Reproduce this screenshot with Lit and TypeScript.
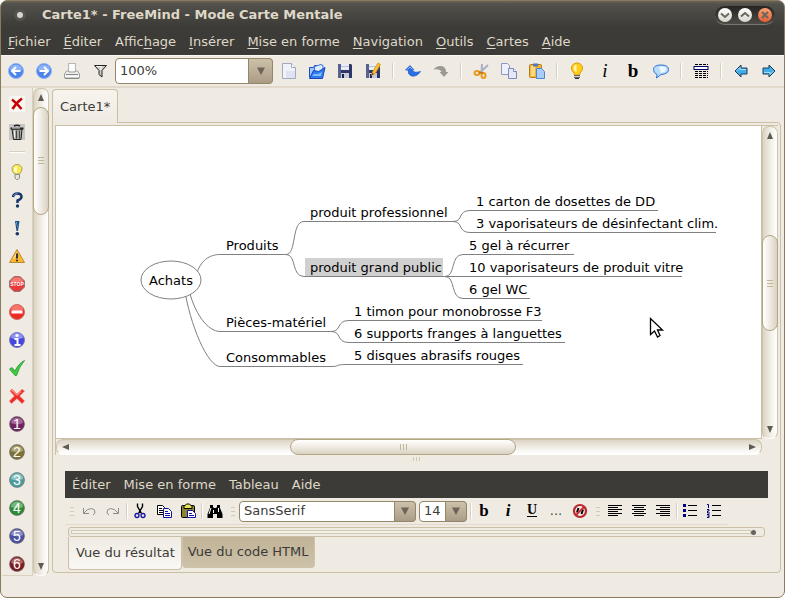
import { LitElement, html, svg, css, nothing, TemplateResult, SVGTemplateResult } from "lit";
import { customElement, property } from "lit/decorators.js";
import { classMap } from "lit/directives/class-map.js";

/* ---------- icons, all on a 16 x 16 grid ---------- */

const roundArrow = (d: string) => svg`
  <circle cx="8" cy="8" r="7.500" fill="#4d84ea" stroke="#8fb2f3"/>
  <path d="M2 7a6 5.500 0 0 1 12 0q-6 3-12 0z" fill="#8db4f7"/>
  <path d=${d} fill="none" stroke="#fff" stroke-width="2"/>`;

const ball = (digit: string, dark: string, light: string) => svg`
  <circle cx="8" cy="8" r="7.500" fill=${dark} stroke="#6d6d6d" stroke-opacity=".6"/>
  <path d="M2 7a6 5.500 0 0 1 12 0q-6 2.500-12 0z" fill=${light}/>
  <text x="8" y="13" text-anchor="middle" class="digit">${digit}</text>`;

const lines = (rows: [number, number][]) =>
  rows.map(([x, w], i) => svg`<rect x=${x} y=${2 + i * 2} width=${w} height="1" fill="#000"/>`);

const floppy = svg`
  <path d="M1 1h13l1 1v13H1z" fill="#2f3768"/>
  <path d="M1 1h3v14H1z" fill="#59628f"/>
  <rect x="4" y="1" width="8" height="6" fill="#e8edf6"/>
  <rect x="4" y="3" width="8" height="1" fill="#b9c4da"/>
  <rect x="4" y="10" width="8" height="5" fill="#c5cbda"/>
  <rect x="5" y="11" width="2" height="4" fill="#1a2046"/>`;

const blueArrow = svg`
  <path d="M2 8 8 2v3h6v6H8v3z" fill="#43ade6" stroke="#1c3a5c"/>
  <path d="M3.500 8 7 4.500V6.500h6" fill="none" stroke="#a5dcf8"/>`;

const ICONS: Record<string, SVGTemplateResult> = {
  prev: roundArrow("M12.500 8H4.500M8 4 4 8l4 4"),
  next: roundArrow("M3.500 8h8M8 4l4 4-4 4"),
  print: svg`
    <path d="M4.500 8V.5h7V8" fill="#fdfdfd" stroke="#b5b5b5"/>
    <path d="M2.500 8h2.500v1h6V8h2.500l2 3v4H.5v-4z" fill="#ececec" stroke="#a0a0a0"/>
    <path d="M2 11.500h12" stroke="#8a8a8a"/><path d="M1 13.500h14" stroke="#fff"/>
    <path d="M1 15.500h14" stroke="#8b8b8b"/>`,
  filter: svg`
    <path d="M2.500 2.500h12L10 7.500V14L7 11.500v-4z" fill="#cfccc4" stroke="#222"/>
    <path d="M4.500 3.500h5L8.500 7" stroke="#fff" fill="none"/>`,
  page: svg`
    <path d="M1.500.5h9l4 4v11h-13z" fill="#f1f3fa" stroke="#a3a9bd"/>
    <path d="M5 8h9v7H5z" fill="#dfe3f1"/>
    <path d="M10.500.5v4h4" fill="#fff" stroke="#a3a9bd"/>`,
  open: svg`
    <path d="M.5 14.500V4.500h4l1-2h3" fill="#9cc8ff" stroke="#1d4fc0"/>
    <path d="M5.500 9V3.500L12 1.500l2 1V9z" fill="#dfeeff" stroke="#3c6fd0"/>
    <path d="M.5 15.500 4.500 7.500l5 1 6.500-4-2.500 11z" fill="#2e7bf0" stroke="#1846b8"/>
    <path d="M3 13h9l1-4-4 2H5z" fill="#7fbaff"/>`,
  save: floppy,
  saveAs: svg`${floppy}
    <path d="M6.500 12.500 8 8l5-8 2.500 1.500-5 8.500z" fill="#f8c233" stroke="#d88a14" stroke-width=".8"/>
    <path d="m6.500 12.500.8-2.500 1.700 1z" fill="#6b3d1a"/>`,
  undo: svg`
    <path d="M.5 7 5 2.500 9 7H7q2 3.500 8.500 1.500-3.500 5.500-9 4.500Q3 12 3 7z" fill="#2a6fe6" stroke="#1b57c8" stroke-width=".7"/>
    <path d="M2.500 6.500 5 4l2.500 2.500" stroke="#86b6ff" fill="none"/>`,
  redo: svg`<path d="M15.500 9 11 14 6.500 9h2Q7 5.500.5 6.500 3.500 2.500 8 3q5 .5 5 6z" fill="#9b9a95"/>`,
  scissors: svg`
    <path d="M9 1 8.500 10M15 2 6 10.500" stroke="#a9aec4" stroke-width="2"/>
    <ellipse cx="4" cy="10" rx="2.500" ry="2" fill="none" stroke="#ea9a1c" stroke-width="2"/>
    <ellipse cx="10.500" cy="12.500" rx="2" ry="2.500" fill="none" stroke="#ea9a1c" stroke-width="2"/>
    <path d="M6 9.500 10 10" stroke="#c77710" stroke-width="2"/>`,
  copy: svg`
    <path d="M.5.5h6l2 2v9h-8z" fill="#eef1fb" stroke="#8c97c4"/>
    <path d="M7.500 5.500h5l3 3v7h-8z" fill="#e4e9f9" stroke="#7f8bbd"/>
    <path d="M12.500 5.500v3h3" fill="#fff" stroke="#7f8bbd"/>`,
  clipboard: svg`
    <rect x=".5" y="1.500" width="12" height="13" rx="1" fill="#f2b433" stroke="#b97b14"/>
    <rect x="2" y="3" width="4" height="10" fill="#fbd984"/>
    <rect x="4" y=".5" width="5" height="3" fill="#5478b8"/>
    <path d="M7.500 5.500h5l3 3v7h-8z" fill="#a9cdf8" stroke="#4e86d2"/>`,
  bulb: svg`
    <path d="M5 10Q2.500 8 2.500 5A5.500 5 0 0 1 13.500 5q0 3-2.500 5l-.5 2h-5z" fill="#ffce1c" stroke="#e09a00"/>
    <path d="M4.500 5q0-3 3-3.500L7.500 9Q4.500 8 4.500 5z" fill="#fff2a0"/>
    <rect x="5" y="12" width="6" height="3" fill="#6b6b6b"/><path d="M5 13.500h6" stroke="#ccc"/>
    <rect x="6" y="15" width="4" height="1" fill="#333"/>`,
  italic: svg`<text x="8" y="14" text-anchor="middle" class="glyph slanted">i</text>`,
  bold: svg`<text x="8" y="14" text-anchor="middle" class="glyph heavy">b</text>`,
  cloud: svg`
    <path d="M4 11.500Q.5 10 .5 6.500.5 2 8 2t7.500 4.500Q15.500 11 8 11.500L3.500 15z" fill="#b8dcfb" stroke="#2f6fd8"/>
    <path d="M6 4q4-2 7 1 1 4-5 5z" fill="#eef8ff"/>`,
  table: svg`
    <path d="M2 1.500h13M2 8.500h13M2 10.500h13M2 12.500h13M2 14.500h13" stroke="#000" stroke-dasharray="3 1"/>
    <rect x="1" y="3.500" width="14" height="3" fill="#fff" stroke="#00006b"/>`,
  left: blueArrow,
  right: svg`<g transform="rotate(180 8 8)">${blueArrow}</g>`,

  delete: svg`<rect width="16" height="16" fill="#f8f6f2"/>
    <path d="M3 3.500q5 4 9.500 9.500M13 2.500Q8 6 3.500 13" stroke="#c80000" stroke-width="2.500" fill="none"/>`,
  trash: svg`<rect width="16" height="16" fill="#c8c7c3"/>
    <path d="M3 5h10l-1 10.500H4.500z" fill="#a9a9a4" stroke="#222"/>
    <path d="M1.500 4.500h13" stroke="#222" stroke-width="2"/><path d="M5 2q3-1.500 6 0" stroke="#222" stroke-width="1.500" fill="none"/>
    <path d="M3 4h8" stroke="#ddd"/>
    <path d="M7.500 6.500v8M10.500 6.500v8" stroke="#444"/>
    <path d="M5.500 6.500v7" stroke="#f2f2f2"/>`,
  idea: svg`
    <path d="M5.500 10Q3 7.500 3 5a5 4.500 0 0 1 10 0q0 2.500-2.500 5z" fill="#fbe84a" stroke="#aaa06a"/>
    <path d="M5 5q.5-2.500 3-3V9Q5 8 5 5z" fill="#fffbd0"/>
    <path d="M6 10.500h4.500V14L9 15.500H7.500L6 14z" fill="#e6e6e0" stroke="#888"/>`,
  question: svg`<path d="M4 5q.5-3.500 4.500-3.500T12.500 5Q12.500 7 8.500 8.500V11" fill="none" stroke="#17346b" stroke-width="2.500"/>
    <circle cx="8.500" cy="14" r="1.700" fill="#17346b"/><path d="M4.500 4q1-2.500 4-2.500" stroke="#6f9bd0" fill="none"/>`,
  important: svg`<path d="M6 1h4.500L9 11H7.500z" fill="#1d5288"/><path d="M7 2h1l.5 7z" fill="#79b0dc"/>
    <circle cx="8.300" cy="13.800" r="1.800" fill="#17346b"/>`,
  warning: svg`
    <path d="M8 1.500 15.500 14.500H.5z" fill="#fcb72f" stroke="#b98a3c" stroke-linejoin="round"/>
    <path d="M8 3.500 4 11q3-1 4-7.500z" fill="#ffe6a0"/>
    <path d="M8 5.500v5" stroke="#333" stroke-width="2"/><circle cx="8" cy="12.500" r="1.100" fill="#333"/>`,
  stop: svg`
    <path d="M5 .5h6L15.500 5v6L11 15.500H5L.5 11V5z" fill="#e83a3a" stroke="#8f7575"/>
    <path d="M5 1.500h6L14 4.500V6H2V4.500z" fill="#f47b74"/>
    <text x="8" y="10" text-anchor="middle" class="sign">STOP</text>`,
  minus: svg`
    <circle cx="8" cy="8" r="7.500" fill="#ee2a24" stroke="#c96e68"/>
    <path d="M2 6a6 5 0 0 1 12 0q-6 2-12 0z" fill="#f6766e"/>
    <rect x="2.500" y="6.500" width="11" height="3" fill="#fff"/>`,
  info: svg`
    <circle cx="8" cy="8" r="7.500" fill="#4347dd" stroke="#7b7cc4"/>
    <path d="M2 6a6 5 0 0 1 12 0q-6 2-12 0z" fill="#8f95f4"/>
    <circle cx="8" cy="3.500" r="1.600" fill="#fff"/><path d="M5.500 7H8.500v5.500M5.500 13h6" stroke="#fff" stroke-width="2" fill="none"/>`,
  check: svg`<path d="M.5 9 3 7.500 6 11Q9.500 3.500 15.500.5 10 7 7.500 15.500H6z" fill="#38d13c" stroke="#2d8a33" stroke-width=".8"/>`,
  cross: svg`
    <path d="M1 3 3 1l5 5 5-4.500L15.500 3l-5 5 5 5-2.500 2.500-5-5-5.500 5L.5 13l5-5z" fill="#f02a24" stroke="#d66" stroke-width=".6"/>
    <path d="M2 3 3 2l5 5 4-3.500" fill="none" stroke="#ff8d80" stroke-width="1.500"/>`,
  n1: ball("1", "#6f2460", "#a56596"),
  n2: ball("2", "#7c7238", "#aba36e"),
  n3: ball("3", "#4d9c9c", "#8cc6c6"),
  n4: ball("4", "#2c8a37", "#74b87a"),
  n5: ball("5", "#4a4f9e", "#8b8fca"),
  n6: ball("6", "#7c1a1e", "#b06064"),

  undoSmall: svg`<path d="M2.500 5v5.500H8M3 10q3-4.500 7.500-4.500 3.500.5 3.500 3.500 0 2-2 3" fill="none" stroke="#8d8b85"/>`,
  redoSmall: svg`<path d="M13.500 5v5.500H8M13 10q-3-4.500-7.500-4.500Q2 6 2 9q0 2 2 3" fill="none" stroke="#8d8b85"/>`,
  cut: svg`
    <path d="M5.500.5v3l4 7M10.500.5v3l-4 7" fill="none" stroke="#000" stroke-width="1.400"/>
    <circle cx="5" cy="12.500" r="2" fill="none" stroke="#1414a0" stroke-width="1.300"/>
    <circle cx="11" cy="12.500" r="2" fill="none" stroke="#1414a0" stroke-width="1.300"/>`,
  copySmall: svg`
    <path d="M1.500 2.500h5l2 2v7h-7z" fill="#fff" stroke="#000"/><path d="M3 5.500h3M3 7.500h4M3 9.500h4" stroke="#000"/>
    <path d="M7.500 5.500h5l3 3v6h-8z" fill="#fff" stroke="#1414a0"/><path d="M9 8.500h3M9 10.500h5M9 12.500h5" stroke="#1414a0"/>`,
  pasteSmall: svg`
    <rect x="1.500" y="2.500" width="13" height="12" rx="1" fill="#8b8430" stroke="#000"/>
    <path d="M4 5.500V3.500L6.500 1h3L12 3.500v2z" fill="#e8e060" stroke="#000"/>
    <path d="M7.500 7.500h5l3 3v4h-8z" fill="#fff" stroke="#1414a0"/><path d="M9 10.500h3M9 12.500h5" stroke="#1414a0"/>`,
  find: svg`
    <path d="M3 2h3v2l1 1h2l1-1V2h3v3l2.500 6v4H10v-4H6v4H.5v-4L3 5z" fill="#000"/>
    <path d="M4 5 2 11M11.500 5v4M6.500 7v3" stroke="#fff"/>`,
  boldSmall: svg`<text x="8" y="13" text-anchor="middle" class="glyph mid heavy">b</text>`,
  italicSmall: svg`<text x="8" y="13" text-anchor="middle" class="glyph mid heavy slanted">i</text>`,
  underline: svg`<text x="8" y="11" text-anchor="middle" class="glyph small heavy">U</text><path d="M3 13.500h10" stroke="#000"/>`,
  more: svg`<text x="8" y="12" text-anchor="middle" class="dots">...</text>`,
  forbid: svg`
    <circle cx="8" cy="8" r="6" fill="#f6eaea" stroke="#b9282c" stroke-width="2.200"/>
    <path d="M6.500 5 5 9.500M11 6.500 9.500 11" stroke="#000" stroke-width="2"/>
    <path d="m4 12 8-8" stroke="#c23034" stroke-width="2"/>`,
  alignLeft: svg`${lines([[1, 14], [1, 10], [1, 14], [1, 10], [1, 14], [1, 10]])}`,
  alignCenter: svg`${lines([[1, 14], [3, 10], [1, 14], [3, 10], [1, 14], [3, 10]])}`,
  alignRight: svg`${lines([[1, 14], [5, 10], [1, 14], [5, 10], [1, 14], [5, 10]])}`,
  bullets: svg`
    <path d="M1 1h3v3H1zM1 6h3v3H1zM1 11h3v3H1z" fill="#00007c"/>
    <path d="M6 2.500h9M6 7.500h9M6 12.500h9" stroke="#000"/>`,
  numbers: svg`
    <path d="M1 1.500h1.500V5M1 6.500h2v1.500H1.500V10H4M1 11.500h2v3H1M1.500 13H3" fill="none" stroke="#00007c"/>
    <path d="M6 2.500h9M6 7.500h9M6 12.500h9" stroke="#000"/>`,
};

const glyphStyles = css`
  .digit { font: 14px "Liberation Sans", sans-serif; fill: #fff; }
  .sign { font: 700 5px "Liberation Sans", sans-serif; fill: #fff; }
  .glyph { font: 19px "Liberation Serif", serif; fill: #000; }
  .glyph.heavy { font-weight: 700; }
  .glyph.slanted { font-style: italic; }
  .glyph.mid { font-size: 17px; }
  .glyph.small { font-size: 14px; }
  .dots { font: 13px "DejaVu Sans", sans-serif; fill: #444; }
`;

@customElement("tool-icon")
class ToolIcon extends LitElement {
  @property() name = "";
  static styles = [glyphStyles, css`
    :host { display: block; width: 16px; height: 16px; }
    svg { display: block; overflow: visible; }
  `];
  render() {
    return html`<svg width="16" height="16" viewBox="0 0 16 16" aria-hidden="true">${ICONS[this.name] ?? nothing}</svg>`;
  }
}

/* ---------- scroll bar ---------- */

@customElement("scroll-track")
class ScrollTrack extends LitElement {
  @property({ reflect: true }) axis = "vertical";
  @property({ type: Number }) before = 0;
  @property({ type: Number }) thumb = 1;
  @property({ type: Number }) after = 0;
  static styles = css`
    :host { display: flex; flex-direction: column; box-sizing: border-box; width: 16px; min-height: 0;
      border: 1px solid #cdc3ab; border-radius: 7px; border-bottom-color: #fff;
      background: linear-gradient(90deg, #dcd4c5, #f4f1ea 60%, #fff); }
    :host([axis="horizontal"]) { flex-direction: row; width: auto; height: 16px;
      background: linear-gradient(#dcd4c5, #f4f1ea 60%, #fff); }
    button { flex: 0 0 18px; padding: 0; border: 0; background: none; display: grid; place-items: center; }
    .thumb { box-sizing: border-box; margin: 0 -1px; border: 1px solid #b3a686; border-radius: 8px;
      display: grid; place-items: center; background: linear-gradient(90deg, #fff, #f1ede5 45%, #dad2c3); }
    :host([axis="horizontal"]) .thumb { margin: -1px 0; background: linear-gradient(#fff, #f1ede5 45%, #dad2c3); }
  `;
  private arrow(flip: boolean) {
    const vertical = this.axis === "vertical";
    const d = vertical ? (flip ? "M1 1h6L4 8z" : "M1 7h6L4 0z") : (flip ? "M1 1v6l7-3z" : "M7 1v6L0 4z");
    return html`<svg width="8" height="8" aria-hidden="true"><path d=${d} fill="#5e5b53"/></svg>`;
  }
  render() {
    const grip = this.axis === "vertical" ? "M1 1.500h6M1 4.500h6M1 7.500h6" : "M1.500 1v6M4.500 1v6M7.500 1v6";
    return html`
      <button aria-label="Reculer">${this.arrow(false)}</button>
      <div style="flex:${this.before}"></div>
      <div class="thumb" style="flex:${this.thumb}">
        <svg width="9" height="9" aria-hidden="true"><path d=${grip} stroke="#c0b598"/></svg>
      </div>
      <div style="flex:${this.after}"></div>
      <button aria-label="Avancer">${this.arrow(true)}</button>`;
  }
}

/* ---------- mind map ---------- */

interface MapNode { text: string; x: number; line: number; from: number; to: number; selected?: boolean; }

const NODES: MapNode[] = [
  { text: "Produits", x: 170, line: 128, from: 164, to: 230 },
  { text: "Pièces-matériel", x: 170, line: 205, from: 164, to: 275 },
  { text: "Consommables", x: 170, line: 240, from: 164, to: 275 },
  { text: "produit professionnel", x: 254, line: 95, from: 248, to: 397 },
  { text: "produit grand public", x: 254, line: 150, from: 248, to: 389, selected: true },
  { text: "1 carton de dosettes de DD", x: 420, line: 84, from: 414, to: 602 },
  { text: "3 vaporisateurs de désinfectant clim.", x: 420, line: 106, from: 414, to: 660 },
  { text: "5 gel à récurrer", x: 413, line: 128, from: 407, to: 518 },
  { text: "10 vaporisateurs de produit vitre", x: 413, line: 150, from: 389, to: 626 },
  { text: "6 gel WC", x: 413, line: 172, from: 407, to: 474 },
  { text: "1 timon pour monobrosse F3", x: 298, line: 194, from: 293, to: 486 },
  { text: "6 supports franges à languettes", x: 298, line: 216, from: 293, to: 509 },
  { text: "5 disques abrasifs rouges", x: 298, line: 238, from: 290, to: 467 },
];

/* parent index, child index */
const EDGES: [number, number][] = [[0, 3], [0, 4], [3, 5], [3, 6], [4, 7], [4, 9], [1, 10], [1, 11], [2, 12]];

@customElement("mind-map")
class MindMap extends LitElement {
  static styles = css`
    :host { display: block; min-width: 0; overflow: hidden; background: #fff; }
    svg { display: block; width: 100%; height: 313px; }
    text { font: 13px "DejaVu Sans", sans-serif; fill: #000; }
    .edge { fill: none; stroke: #808080; }
    .root { fill: #fff; stroke: #808080; }
    .mark { fill: #d0d0d0; }
  `;
  render() {
    return html`<svg role="img" aria-label="Carte mentale Achats">
      <path class="edge" d="M140 150C144 134 154 128.500 164 128.500M132 160C138 188 152 205.500 164 205.500M128 160C134 200 152 240.500 164 240.500"/>
      ${EDGES.map(([p, c]) => {
        const a = NODES[p], b = NODES[c];
        const mid = (a.to + b.from) / 2;
        return svg`<path class="edge" d="M${a.to} ${a.line + 0.5}C${mid + 2} ${a.line + 0.5} ${mid - 4} ${b.line + 0.5} ${b.from} ${b.line + 0.5}"/>`;
      })}
      <ellipse class="root" cx="115" cy="154" rx="30" ry="19"/>
      <text x="115" y="159" text-anchor="middle">Achats</text>
      ${NODES.map(n => svg`
        ${n.selected ? svg`<rect class="mark" x="249" y=${n.line - 18} width="138" height="18"/>` : nothing}
        <path class="edge" d="M${n.from} ${n.line + 0.5}H${n.to}"/>
        <text x=${n.x} y=${n.line - 4}>${n.text}</text>`)}
      <path d="M594.500 192.500v16l4-3.500 3 6 2.500-1.500-2.500-5.500h5z" fill="#fff" stroke="#000" stroke-width="1.300"/>
    </svg>`;
  }
}

/* ---------- window ---------- */

type Tool = [icon: string, label: string] | "sep" | "grip";

const MENUS = ["F|ichier", "É|diter", "Affic|h|age", "I|nsérer", "M|ise en forme", "N|avigation", "O|utils", "C|artes", "A|ide"];
const EDITOR_MENUS = ["Éditer", "Mise en forme", "Tableau", "Aide"];

const MAIN_A: Tool[] = [["prev", "Carte précédente"], ["next", "Carte suivante"], ["print", "Imprimer"], ["filter", "Filtrer"]];
const MAIN_B: Tool[] = [
  ["page", "Nouveau"], ["open", "Ouvrir"], ["save", "Enregistrer"], ["saveAs", "Enregistrer sous"], "sep",
  ["undo", "Annuler"], ["redo", "Rétablir"], "sep",
  ["scissors", "Couper"], ["copy", "Copier"], ["clipboard", "Coller"], "sep",
  ["bulb", "Nouveau nœud"], ["italic", "Italique"], ["bold", "Gras"], ["cloud", "Nuage"], "sep",
  ["table", "Attributs"], "sep", ["left", "Gauche"], ["right", "Droite"],
];
const SIDE: Tool[] = [
  ["delete", "Retirer la dernière icône"], ["trash", "Retirer toutes les icônes"], "sep",
  ["idea", "Idée"], ["question", "Question"], ["important", "Important"], ["warning", "Attention"], ["stop", "Stop"],
  ["minus", "Interdit"], ["info", "Information"], ["check", "Oui"], ["cross", "Non"],
  ["n1", "Priorité 1"], ["n2", "Priorité 2"], ["n3", "Priorité 3"], ["n4", "Priorité 4"], ["n5", "Priorité 5"], ["n6", "Priorité 6"],
];
const EDIT_A: Tool[] = [
  "grip", ["undoSmall", "Annuler"], ["redoSmall", "Rétablir"], "sep",
  ["cut", "Couper"], ["copySmall", "Copier"], ["pasteSmall", "Coller"], "sep", ["find", "Rechercher"], "grip",
];
const EDIT_B: Tool[] = [
  "sep", ["boldSmall", "Gras"], ["italicSmall", "Italique"], ["underline", "Souligné"], ["more", "Police"], ["forbid", "Effacer le format"], "grip",
  ["alignLeft", "Aligner à gauche"], ["alignCenter", "Centrer"], ["alignRight", "Aligner à droite"], "sep",
  ["bullets", "Liste à puces"], ["numbers", "Liste numérotée"],
];

@customElement("app-root")
class AppRoot extends LitElement {
  static styles = css`
    * { box-sizing: border-box; }
    :host { display: flex; flex-direction: column; box-sizing: border-box; min-height: 100vh; overflow: hidden;
      border: 1px solid #8a7b5e; border-radius: 7px; background: #efebe3;
      font: 13px/16px "DejaVu Sans", sans-serif; color: #3c3b37; }
    button { font: inherit; color: inherit; padding: 0; border: 0; background: none; }

    .head { background: #3c3b37 linear-gradient(#6a6455, #52514b 3px, #3c3b37 26px) no-repeat; color: #dfd8c8; }
    .title { display: flex; align-items: center; height: 28px; padding: 0 9px 0 13px; gap: 16px; }
    .title h1 { flex: 1; margin: 0; font: 700 13px/16px "DejaVu Sans", sans-serif; }
    .orb { width: 12px; height: 12px; border-radius: 6px; border: 3px solid #55534d; background: #d9d5cc; }
    .controls { display: flex; gap: 6px; padding: 2px 3px; border-radius: 10px;
      background: linear-gradient(#262521, #4c4b46); border-bottom: 1px solid #77756d; }
    .controls button { width: 14px; height: 14px; border-radius: 7px; display: grid; place-items: center;
      background: linear-gradient(#fff, #dad6cb); }
    .controls .close { background: linear-gradient(#f9a178, #e4602f); }
    .menus { display: flex; gap: 13px; height: 26px; padding: 0 7px; white-space: nowrap; }
    .menus u { text-underline-offset: 2px; }

    .tools { display: flex; align-items: center; height: 33px; padding-left: 1px; border-top: 1px solid #faf8f3; border-bottom: 2px solid #e2d9ca; }
    .tool { width: 28px; height: 28px; display: grid; place-items: center; flex: none; }
    .sep { flex: none; width: 12px; display: flex; justify-content: center; }
    .sep::before { content: ""; width: 2px; height: 16px; background: linear-gradient(90deg, #d9cfbf 50%, #fff 50%); }
    .grip { flex: none; width: 11px; height: 9px; display: flex; justify-content: center; }
    .grip::before { content: ""; width: 4px; background: repeating-linear-gradient(#d6cab4 0 1px, transparent 1px 4px); }

    .combo { display: grid; flex: none; margin: 0 2px 0 1px; height: 26px; }
    .combo > * { grid-area: 1 / 1; }
    select { appearance: none; width: 100%; height: 100%; padding: 0 26px 0 4px; font: inherit; color: #3c3b37;
      background: #fff; border: 1px solid #94866a; border-radius: 4px; }
    .arrow { justify-self: end; width: 25px; display: grid; place-items: center; pointer-events: none; border: 1px solid #94866a;
      border-radius: 0 4px 4px 0; background: linear-gradient(#cdc1aa, #ab9d85); }
    .zoom { width: 158px; }
    .face { width: 177px; }
    .size { width: 48px; }

    .body { flex: 1; display: flex; min-height: 0; margin-bottom: 21px; padding: 0 1px; }
    .side { width: 31px; height: 488px; padding: 2px 0 0 1px; overflow: hidden; border-right: 1px solid #d9d0bd; border-bottom: 1px solid #d9d0bd; }
    .side .sep { width: 28px; height: 12px; align-items: center; }
    .side .sep::before { width: 16px; height: 2px; background: linear-gradient(#d9cfbf 50%, #fff 50%); }
    .rail { align-self: stretch; }

    .desk { flex: 1; min-width: 0; display: flex; flex-direction: column; margin: 1px 2px 3px 3px; }
    .tab { align-self: flex-start; height: 34px; padding: 0 7px; border: 1px solid #cbbfa6; border-bottom: 0; border-radius: 4px 4px 0 0;
      background: linear-gradient(#f7f4ee, #efebe3); margin-bottom: -1px; z-index: 1; }
    .sheet { flex: 1; display: flex; flex-direction: column; padding: 2px; border: 1px solid #cbbfa6; border-radius: 0 4px 4px 4px; }
    .view { display: grid; grid-template-columns: 1fr 16px; grid-template-rows: 313px 16px; border: 1px solid #cbbfa6; border-width: 1px 0 0 1px; }
    .view mind-map { border: 0 solid #cbbfa6; border-width: 0 1px 1px 0; }
    .divider { height: 16px; padding-top: 2px; display: flex; justify-content: center; }
    .divider::before { content: ""; width: 7px; height: 4px; background: repeating-linear-gradient(90deg, #d2c7af 0 1px, transparent 1px 3px); }

    .editor { margin: 0 10px; }
    .editor .menus { height: 27px; background: #3c3b37; color: #dfd8c8; }
    .editor .tools { height: 27px; border-top: 0; border-bottom-width: 1px; margin-right: 40px; }
    .editor .tool { width: 24px; height: 24px; }
    .editor .sep { width: 3px; }
    .editor .combo { height: 21px; }
    .editor .arrow { width: 22px; }
    .strip { height: 10px; margin: 2px 3px 0; padding: 2px 8px 2px 2px; border: 1px solid #cbbfa6; border-radius: 3px; display: flex; align-items: center; }
    .strip .groove { flex: 1; height: 4px; border: 1px solid #d3c8b1; background: #f3f0e9; }
    .strip .knob { width: 5px; height: 5px; border-radius: 3px; background: #66635c; }
    .tabs { display: flex; align-items: flex-start; padding-left: 3px; }
    .tabs button { height: 31px; padding: 0 5px; border: 1px solid #cfc4aa; border-top: 0; border-radius: 0 0 4px 4px; white-space: nowrap;
      background: linear-gradient(#c0b397, #cdc2aa); }
    .tabs button.on { height: 33px; padding: 0 6px 0 7px; border-color: #cbbfa6; background: linear-gradient(#efebe3, #faf8f5); }
  `;

  private tools(list: Tool[]): TemplateResult[] {
    return list.map(t => typeof t === "string"
      ? html`<span class=${t}></span>`
      : html`<button class="tool" aria-label=${t[1]}><tool-icon name=${t[0]}></tool-icon></button>`);
  }

  /* A label with its access key: "Affic|h|age" or "F|ichier". */
  private menu(label: string) {
    const parts = label.split("|");
    const [pre, key, post] = parts.length === 3 ? parts : ["", parts[0], parts[1]];
    return html`<button>${pre}<u>${key}</u>${post}</button>`;
  }

  private combo(kind: string, label: string, value: string) {
    return html`<span class=${classMap({ combo: true, [kind]: true })}>
      <select aria-label=${label}><option>${value}</option></select>
      <span class="arrow"><svg width="10" height="8" aria-hidden="true"><path d="M1 .5h8L5 8z" fill="#6d6558"/></svg></span>
    </span>`;
  }

  private control(kind: string, label: string, d: string) {
    return html`<button class=${kind} aria-label=${label}>
      <svg width="10" height="10" aria-hidden="true"><path d=${d} fill="none" stroke="#6b675d" stroke-width="2"/></svg>
    </button>`;
  }

  render() {
    return html`
      <header class="head">
        <div class="title">
          <span class="orb"></span>
          <h1>Carte1* - FreeMind - Mode Carte Mentale</h1>
          <div class="controls">
            ${this.control("min", "Réduire", "M1 3.500 5 7l4-3.500")}
            ${this.control("max", "Agrandir", "M1 6.500 5 3l4 3.500")}
            ${this.control("close", "Fermer", "m2 2 6 6M8 2 2 8")}
          </div>
        </div>
        <nav class="menus">${MENUS.map(m => this.menu(m))}</nav>
      </header>
      <div class="tools">${this.tools(MAIN_A)}${this.combo("zoom", "Zoom", "100%")}${this.tools(MAIN_B)}</div>
      <div class="body">
        <div class="side">${this.tools(SIDE)}</div>
        <scroll-track class="rail" .before=${0} .thumb=${106} .after=${343}></scroll-track>
        <main class="desk">
          <button class="tab">Carte1*</button>
          <div class="sheet">
            <div class="view">
              <mind-map></mind-map>
              <scroll-track .before=${91} .thumb=${95} .after=${90}></scroll-track>
              <scroll-track axis="horizontal" .before=${217} .thumb=${225} .after=${229}></scroll-track>
            </div>
            <div class="divider"></div>
            <section class="editor">
              <nav class="menus">${EDITOR_MENUS.map(m => html`<button>${m}</button>`)}</nav>
              <div class="tools">
                ${this.tools(EDIT_A)}${this.combo("face", "Police", "SansSerif")}${this.combo("size", "Taille", "14")}${this.tools(EDIT_B)}
              </div>
              <div class="strip"><span class="groove"></span><span class="knob"></span></div>
              <div class="tabs"><button class="on">Vue du résultat</button><button>Vue du code HTML</button></div>
            </section>
          </div>
        </main>
      </div>`;
  }
}
